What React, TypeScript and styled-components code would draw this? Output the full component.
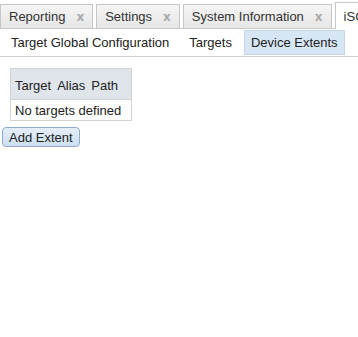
import styled, { createGlobalStyle } from "styled-components";

const GlobalStyle = createGlobalStyle`
  html, body {
    margin: 0;
    padding: 0;
    background: #fff;
  }
  body {
    font-family: "Liberation Sans", Arial, sans-serif;
    font-size: 13px;
    line-height: 15px;
    color: #222;
  }
`;

const Page = styled.div`
  width: 358px;
  height: 337px;
  overflow: hidden;
`;

const TabBar = styled.div`
  display: flex;
  align-items: flex-end;
  gap: 3px;
  height: 28px;
  border-bottom: 1px solid #c9c9c9;
  white-space: nowrap;
`;

const Tab = styled.div<{ $active?: boolean }>`
  flex: none;
  display: flex;
  align-items: center;
  height: ${({ $active }) => ($active ? "26px" : "23px")};
  padding: 0 8px;
  border: 1px solid #c6c6c6;
  border-bottom: none;
  background: ${({ $active }) =>
    $active ? "#fff" : "linear-gradient(#f5f5f5, #e6e6e6)"};
  color: #333;
  margin-bottom: ${({ $active }) => ($active ? "-1px" : "0")};
`;

const Close = styled.span`
  margin-left: 11px;
  font: bold 12px "DejaVu Sans", sans-serif;
  color: #aaa;
`;

const SubNav = styled.div`
  display: flex;
  align-items: center;
  gap: 4px;
  height: 27px;
  padding: 0 3px;
  border-bottom: 1px solid #cfcfcf;
`;

const SubItem = styled.div<{ $active?: boolean }>`
  padding: 4px ${({ $active }) => ($active ? "6px" : "7px")};
  border: 1px solid ${({ $active }) => ($active ? "#c3d6ea" : "transparent")};
  background: ${({ $active }) => ($active ? "#d6e6f5" : "transparent")};
  color: #222;
`;

const Content = styled.div`
  padding: 11px 2px;
  display: flex;
  flex-direction: column;
  align-items: flex-start;
  gap: 6px;
`;

const Table = styled.table`
  margin-left: 8px;
  border-collapse: collapse;
  border: 1px solid #d3d3d3;
`;

const HeadCell = styled.th`
  font-weight: normal;
  text-align: left;
  background: #dfe5eb;
  height: 28px;
  padding: 2px 3px 0 3px;
  &:first-child {
    padding-left: 4px;
  }
  &:last-child {
    padding-right: 13px;
  }
`;

const Cell = styled.td`
  height: 20px;
  padding: 0 4px;
  border-top: 1px solid #d3d3d3;
`;

const Button = styled.button`
  font: inherit;
  color: #222;
  height: 20px;
  padding: 0 6px;
  border: 1px solid #8eabcb;
  border-radius: 4px;
  background: linear-gradient(#e4eef8, #cddff1);
`;

const tabs = ["Reporting", "Settings", "System Information"];

export default function App() {
  return (
    <Page>
      <GlobalStyle />
      <TabBar>
        {tabs.map((t) => (
          <Tab key={t}>
            {t}
            <Close>x</Close>
          </Tab>
        ))}
        <Tab $active>iSCSI</Tab>
      </TabBar>
      <SubNav>
        <SubItem>Target Global Configuration</SubItem>
        <SubItem>Targets</SubItem>
        <SubItem $active>Device Extents</SubItem>
      </SubNav>
      <Content>
        <Table>
          <thead>
            <tr>
              <HeadCell>Target</HeadCell>
              <HeadCell>Alias</HeadCell>
              <HeadCell>Path</HeadCell>
            </tr>
          </thead>
          <tbody>
            <tr>
              <Cell colSpan={3}>No targets defined</Cell>
            </tr>
          </tbody>
        </Table>
        <Button>Add Extent</Button>
      </Content>
    </Page>
  );
}
